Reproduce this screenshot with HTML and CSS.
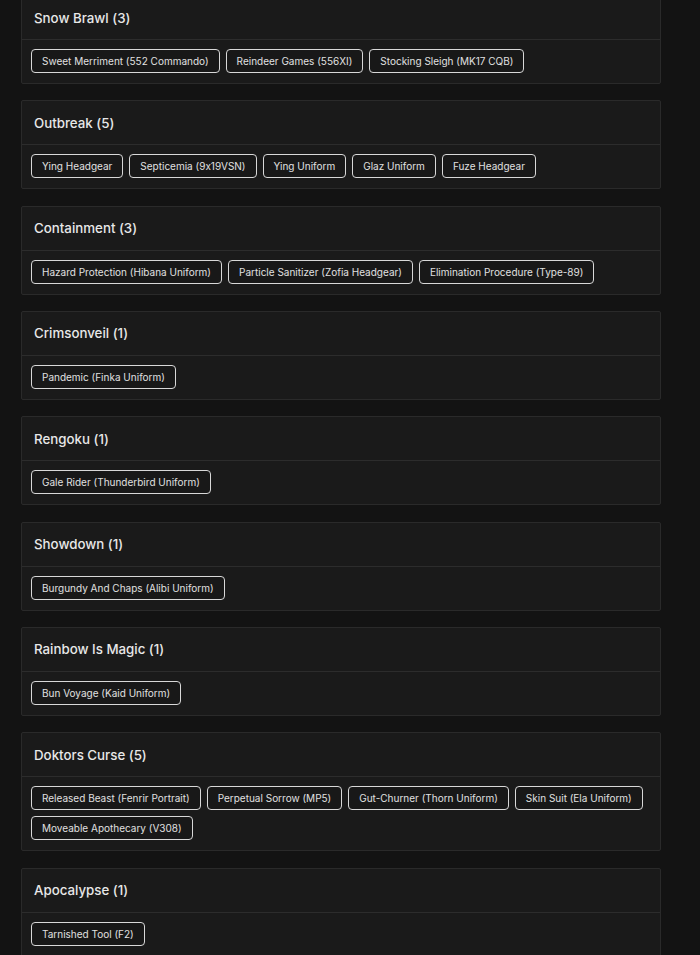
FILE: index.html
```html
<!DOCTYPE html>
<html lang="en">
<head>
<meta charset="utf-8">
<title>Events</title>
<link rel="stylesheet" href="styles.css">
</head>
<body>
<main class="list">
  <section class="card">
    <h2 class="card-header">Snow Brawl (3)</h2>
    <div class="card-body">
      <span class="tag">Sweet Merriment (552 Commando)</span>
      <span class="tag">Reindeer Games (556XI)</span>
      <span class="tag">Stocking Sleigh (MK17 CQB)</span>
    </div>
  </section>
  <section class="card">
    <h2 class="card-header">Outbreak (5)</h2>
    <div class="card-body">
      <span class="tag">Ying Headgear</span>
      <span class="tag">Septicemia (9x19VSN)</span>
      <span class="tag">Ying Uniform</span>
      <span class="tag">Glaz Uniform</span>
      <span class="tag">Fuze Headgear</span>
    </div>
  </section>
  <section class="card">
    <h2 class="card-header">Containment (3)</h2>
    <div class="card-body">
      <span class="tag">Hazard Protection (Hibana Uniform)</span>
      <span class="tag">Particle Sanitizer (Zofia Headgear)</span>
      <span class="tag">Elimination Procedure (Type-89)</span>
    </div>
  </section>
  <section class="card">
    <h2 class="card-header">Crimsonveil (1)</h2>
    <div class="card-body">
      <span class="tag">Pandemic (Finka Uniform)</span>
    </div>
  </section>
  <section class="card">
    <h2 class="card-header">Rengoku (1)</h2>
    <div class="card-body">
      <span class="tag">Gale Rider (Thunderbird Uniform)</span>
    </div>
  </section>
  <section class="card">
    <h2 class="card-header">Showdown (1)</h2>
    <div class="card-body">
      <span class="tag">Burgundy And Chaps (Alibi Uniform)</span>
    </div>
  </section>
  <section class="card">
    <h2 class="card-header">Rainbow Is Magic (1)</h2>
    <div class="card-body">
      <span class="tag">Bun Voyage (Kaid Uniform)</span>
    </div>
  </section>
  <section class="card">
    <h2 class="card-header">Doktors Curse (5)</h2>
    <div class="card-body">
      <span class="tag">Released Beast (Fenrir Portrait)</span>
      <span class="tag">Perpetual Sorrow (MP5)</span>
      <span class="tag">Gut-Churner (Thorn Uniform)</span>
      <span class="tag">Skin Suit (Ela Uniform)</span>
      <span class="tag">Moveable Apothecary (V308)</span>
    </div>
  </section>
  <section class="card">
    <h2 class="card-header">Apocalypse (1)</h2>
    <div class="card-body">
      <span class="tag">Tarnished Tool (F2)</span>
    </div>
  </section>
</main>
</body>
</html>
```

FILE: styles.css
```css
html, body {
  margin: 0;
  padding: 0;
  background: #131313;
  height: 955px;
  overflow: hidden;
}
body {
  font-family: Inter, "Open Sans", sans-serif;
  font-feature-settings: "calt" 0;
  color: #e6e6e6;
}
.list {
  width: 640px;
  margin: -5px 0 0 21px;
  display: flex;
  flex-direction: column;
  gap: 16.33px;
}
.card {
  background: #1a1a1a;
  border: 1px solid #2a2a2a;
  border-radius: 2px;
}
.card-header {
  margin: 0;
  height: 44px;
  box-sizing: border-box;
  padding: 0 12px;
  display: flex;
  align-items: center;
  font-size: 13.3px;
  font-weight: 500;
  color: #e8e8e8;
  border-bottom: 1px solid #2c2c2c;
}
.card-body {
  padding: 9px 9px 10px;
  display: flex;
  flex-wrap: wrap;
  gap: 6px 6px;
}
.tag {
  height: 24px;
  box-sizing: border-box;
  display: inline-flex;
  align-items: center;
  padding: 0 10px;
  border: 1px solid #d8d8d8;
  border-radius: 4px;
  font-size: 10px;
  color: #e0e0e0;
  background: #181818;
  white-space: nowrap;
}
```
